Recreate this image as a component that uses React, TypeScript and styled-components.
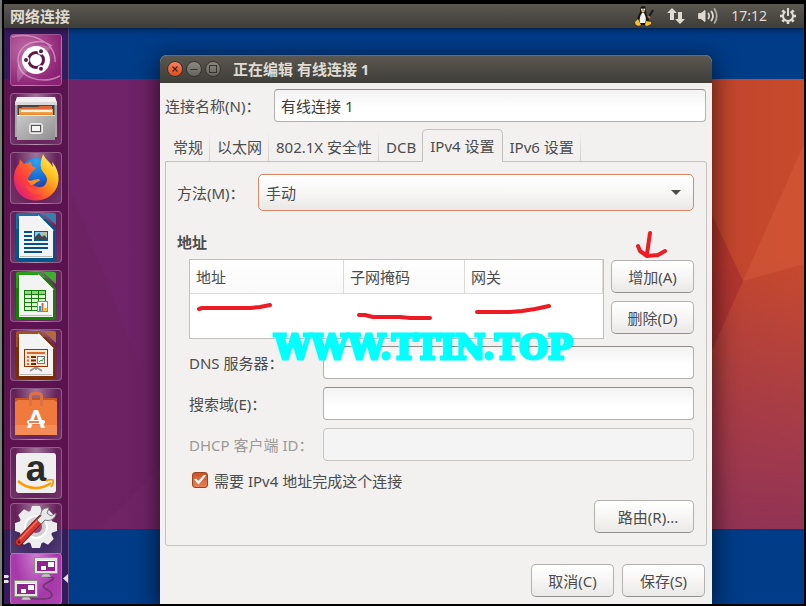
import React from "react";
import styled, { createGlobalStyle, css } from "styled-components";

const GlobalStyle = createGlobalStyle`
  * { box-sizing: border-box; }
  body {
    margin: 0;
    background: #000;
    color: #4c4c4c;
    font: 15px/22px "Noto Sans", "Noto Sans CJK SC", sans-serif;
  }
  button, input, select { font: inherit; color: inherit; }
`;

const Frame = styled.div`
  display: flex;
  flex-direction: column;
  height: 100vh;
  padding: 4px 2px 2px 2px;
  border-left: 2px solid #7c7c7c;
  background: #000;
`;

const TopPanel = styled.header`
  position: relative;
  z-index: 2;
  display: flex;
  align-items: center;
  justify-content: space-between;
  flex: none;
  height: 24px;
  padding: 0 8px 0 6px;
  background: linear-gradient(#5b5851, #3f3d38);
  box-shadow: 0 1px 6px rgba(0, 0, 0, 0.6);
  color: #dfdbd2;
`;

const PanelTitle = styled.span`
  font-weight: 600;
`;

const Indicators = styled.div`
  display: flex;
  align-items: center;
  gap: 13px;
`;

const Clock = styled.time`
  font-size: 14px;
`;

const Screen = styled.div`
  position: relative;
  display: flex;
  flex: 1;
  min-height: 0;
  overflow: hidden;
  background: #003c88;
`;

const WallpaperArt = styled.svg`
  position: absolute;
  inset: 0;
  width: 100%;
  height: 100%;
`;

const Launcher = styled.nav`
  position: relative;
  flex: none;
  width: 65px;
  padding: 6px 6px 0;
  background: rgba(80, 10, 66, 0.65);
  border-right: 1px solid rgba(255, 255, 255, 0.2);
`;

const Tile = styled.button<{ $gap?: number; $active?: boolean; $dash?: boolean }>`
  position: relative;
  display: block;
  width: 52px;
  height: 52px;
  margin: 0 0 ${(p) => p.$gap ?? 7}px;
  padding: 0;
  border: 1px solid rgba(255, 255, 255, 0.24);
  border-radius: 4px;
  background: radial-gradient(ellipse at 50% 0, rgba(255, 255, 255, 0.42), rgba(255, 255, 255, 0.06) 60%, rgba(255, 255, 255, 0.14));
  ${(p) => p.$dash && css`background: radial-gradient(circle at 30% 30%, #c06ba8, #8c2274 75%);`}
  ${(p) => p.$active && css`background: radial-gradient(ellipse at 50% 0, #d07cd2, #a638a9 60%, #b044b2);`}
`;

const TileArt = styled.svg`
  display: block;
  width: 52px;
  height: 52px;
  margin: -1px;
`;

const RunningMark = styled.svg`
  position: absolute;
  left: 0;
  top: 545px;
  width: 64px;
  height: 12px;
`;

const Desktop = styled.main`
  position: relative;
  display: flex;
  flex: 1;
  min-width: 0;
  padding: 27px 92px 0 91px;
`;

const Window = styled.section`
  position: relative;
  display: flex;
  flex: 1;
  flex-direction: column;
  min-width: 0;
  border-radius: 7px 7px 0 0;
  background: #f2f1f0;
  box-shadow: 0 6px 24px 2px rgba(0, 0, 0, 0.6);
`;

const TitleBar = styled.header`
  display: flex;
  align-items: center;
  gap: 3px;
  height: 28px;
  padding: 0 8px 0 7px;
  border-radius: 7px 7px 0 0;
  background: linear-gradient(#5b5851, #3f3d38);
  box-shadow: inset 0 1px #6d6a62;
`;

const WindowButton = styled.button<{ $close?: boolean }>`
  display: grid;
  place-items: center;
  width: 16px;
  height: 16px;
  padding: 0;
  border: 1px solid #34332f;
  border-radius: 50%;
  background: ${(p) => (p.$close ? "linear-gradient(#f5825c, #df4b1c)" : "linear-gradient(#8b887f, #66645d)")};
  svg { width: 14px; height: 14px; }
`;

const WindowTitle = styled.h1`
  margin: 0 0 0 9px;
  color: #dfdbd2;
  font-size: 15px;
  font-weight: 700;
  line-height: 28px;
`;

const Form = styled.form`
  display: flex;
  flex-direction: column;
  padding: 6px 5px 0;
`;

const Row = styled.div`
  display: flex;
  align-items: center;
`;

const NameRow = styled(Row)`
  padding-right: 1px;
  margin-bottom: 7px;
`;

const Fields = styled.div`
  display: grid;
  gap: 8px;
  margin-top: 7px;
  padding-left: 12px;
`;

const Label = styled.label<{ $width: number; $muted?: boolean }>`
  flex: none;
  width: ${(p) => p.$width}px;
  white-space: nowrap;
  color: ${(p) => (p.$muted ? "#9c9a97" : "inherit")};
`;

const TextBox = styled.input`
  flex: 1;
  min-width: 0;
  height: 33px;
  padding: 0 6px;
  border: 1px solid #b3b1ad;
  border-top-color: #8f8d8a;
  border-radius: 4px;
  background: linear-gradient(#f3f3f3, #fff 60%);
  color: #3c3c3c;
  &:disabled {
    border-color: #c8c6c3;
    background: #f4f4f4;
  }
`;

const TabList = styled.div`
  display: flex;
  align-items: flex-end;
  height: 33px;
  margin-bottom: -1px;
  padding-left: 1px;
`;

const Tab = styled.button<{ $active?: boolean }>`
  height: 32px;
  padding: 2px 7px 0;
  border: 0;
  white-space: nowrap;
  background: linear-gradient(rgba(190, 188, 184, 0), #cfcdca) right / 1px 100% no-repeat;
  ${(p) =>
    p.$active &&
    css`
      position: relative;
      height: 33px;
      margin-left: -1px;
      padding: 0 7px;
      border: 1px solid #c2c1be;
      border-bottom: 0;
      border-radius: 5px 5px 0 0;
      background: #f2f1f0;
    `}
`;

const TabPanel = styled.div`
  height: 385px;
  padding: 12px 12px 0 11px;
  border: 1px solid #c2c1be;
  border-radius: 0 3px 3px 3px;
`;

const SelectBox = styled.div`
  position: relative;
  flex: 1;
  svg {
    position: absolute;
    right: 12px;
    top: 15px;
    width: 12px;
    height: 7px;
    pointer-events: none;
  }
`;

const Select = styled.select`
  width: 100%;
  height: 37px;
  padding: 0 7px;
  border: 1px solid #d98767;
  border-radius: 5px;
  background: linear-gradient(#fff, #f8f7f6 50%, #eae8e6);
  appearance: none;
`;

const SectionTitle = styled.h2`
  margin: 20px 0 6px;
  font-size: 15px;
  font-weight: 700;
  line-height: 22px;
`;

const AddressArea = styled.div`
  display: flex;
  gap: 7px;
  padding-left: 12px;
`;

const AddressTable = styled.table`
  flex: 1;
  height: 80px;
  border: 1px solid #c2c0bd;
  border-collapse: separate;
  border-spacing: 0;
  table-layout: fixed;
  background: #fff;
`;

const HeadCell = styled.th<{ $width?: number }>`
  width: ${(p) => (p.$width ? `${p.$width}px` : "auto")};
  height: 34px;
  padding: 0 6px;
  border-right: 1px solid #dddbd8;
  border-bottom: 1px solid #dddbd8;
  background: linear-gradient(#fff, #f9f9fa);
  font-weight: 400;
  text-align: left;
`;

const ButtonStack = styled.div`
  display: grid;
  align-content: start;
  gap: 8px;
  padding-top: 1px;
`;

const PushButton = styled.button<{ $wide?: boolean }>`
  width: ${(p) => (p.$wide ? 100 : 83)}px;
  height: 33px;
  padding: ${(p) => (p.$wide ? "0 0 0 8px" : "0")};
  border: 1px solid #b4b2ae;
  border-bottom-color: #94928e;
  border-radius: 5px;
  background: linear-gradient(#fff, #f7f6f5 50%, #eae8e6);
`;

const CheckRow = styled.label`
  display: flex;
  align-items: center;
  gap: 6px;
  margin-top: 9px;
  padding-left: 15px;
`;

const CheckBox = styled.input`
  display: grid;
  place-items: center;
  width: 16px;
  height: 16px;
  margin: 0 0 3px;
  border: 1px solid #9c4524;
  border-radius: 3px;
  background: linear-gradient(#d2511f, #e48158);
  appearance: none;
  &:checked::before {
    content: "";
    width: 12px;
    height: 10px;
    background: #fff;
    clip-path: polygon(0 50%, 18% 40%, 36% 66%, 86% 0, 100% 10%, 38% 100%);
  }
`;

const Actions = styled.div<{ $inset?: boolean }>`
  display: flex;
  justify-content: flex-end;
  gap: 8px;
  margin-top: ${(p) => (p.$inset ? 8 : 18)}px;
  padding-right: ${(p) => (p.$inset ? 0 : 2)}px;
`;

const Marks = styled.svg`
  position: absolute;
  left: 0;
  top: 0;
  width: 552px;
  height: 549px;
  pointer-events: none;
`;

const Watermark = styled.span`
  position: absolute;
  left: 114px;
  top: 271px;
  color: #00ffff;
  font: 700 33px/44px "DejaVu Serif", serif;
  -webkit-text-stroke: 3px #00ffff;
  white-space: nowrap;
  pointer-events: none;
`;

const Wallpaper = () => (
  <WallpaperArt viewBox="0 0 800 576" preserveAspectRatio="none" aria-hidden="true">
    <defs>
      <linearGradient id="wp" x1="0" x2="1">
        <stop offset="0" stopColor="#73246c" />
        <stop offset=".2" stopColor="#6e2266" />
        <stop offset=".85" stopColor="#bf442d" />
        <stop offset="1" stopColor="#c84a2c" />
      </linearGradient>
      <linearGradient id="wpFade" x1="0" y1="0" x2="0" y2="1">
        <stop offset=".4" stopColor="#8e335e" stopOpacity="0" />
        <stop offset="1" stopColor="#923355" />
      </linearGradient>
    </defs>
    <rect y="51" width="800" height="450" fill="url(#wp)" />
    <path d="M66 160 136 340V501H66Z" fill="#651f55" opacity=".25" />
    <path d="M95 501 160 436V501Z" fill="#7b2a6b" opacity=".25" />
    <rect x="400" y="51" width="400" height="450" fill="url(#wpFade)" />
    <path d="M800 116 739 253 800 236Z" fill="#e06743" opacity=".32" />
    <path d="M700 170 739 253 700 340Z" fill="#9b1f2c" opacity=".4" />
  </WallpaperArt>
);

const DashIcon = () => (
  <TileArt viewBox="0 0 52 52">
    <path d="M2 3C22-2 46 8 45 28M50 42C32 51 8 44 8 26C8 10 28 2 42 12" fill="none" stroke="#e7b5da" strokeWidth="1.500" opacity=".6" />
    <path d="M8 48C3 24 20 4 42 14L26 26Z" fill="#fff" opacity=".2" />
    <circle cx="26" cy="26" r="14" fill="#fff" />
    <circle cx="26" cy="26" r="7.500" fill="none" stroke="#5e1747" strokeWidth="3" />
    <g stroke="#fff" strokeWidth="1.400" fill="#5e1747">
      <circle cx="16" cy="26" r="2.700" /><circle cx="31" cy="17.300" r="2.700" /><circle cx="31" cy="34.700" r="2.700" />
    </g>
  </TileArt>
);

const FilesIcon = () => (
  <TileArt viewBox="0 0 52 52">
    <defs>
      <linearGradient id="cab" x1="0" x2="1" y1="0" y2="1"><stop stopColor="#c9c9c9" /><stop offset="1" stopColor="#8f8f8f" /></linearGradient>
    </defs>
    <path d="M7 4H45L47 10V44H5V10Z" fill="#a9a9a9" />
    <path d="M7 4H45L47 10H5Z" fill="#f1f1f1" />
    <path d="M5 9H47V12H5Z" fill="#d8d8d8" />
    <path d="M7.500 12H44.500V23H7.500Z" fill="#45433f" />
    <path d="M12 14H28L30 13H42V22H9V15H12Z" fill="#dc6738" />
    <path d="M9 16H43V22H9Z" fill="#f2a34c" />
    <path d="M11 17H42V19H11Z" fill="#fff1da" />
    <path d="M9 20H43V22H9Z" fill="#ee8f35" />
    <path d="M7 22H45V47H7Z" fill="url(#cab)" />
    <path d="M7 22.500H45" stroke="#ececec" />
    <rect x="19.500" y="30.500" width="13" height="10" rx="2" fill="#cfcfcf" stroke="#eee" />
    <rect x="21.500" y="32.500" width="9" height="6" fill="#f5f5f5" stroke="#555" />
  </TileArt>
);

const FirefoxIcon = () => (
  <TileArt viewBox="0 0 52 52">
    <defs>
      <linearGradient id="fxTail" x1=".8" y1="0" x2=".2" y2="1"><stop stopColor="#fff36a" /><stop offset=".35" stopColor="#ffc21f" /><stop offset=".65" stopColor="#ff7b1e" /><stop offset="1" stopColor="#f5314e" /></linearGradient>
      <linearGradient id="fxBody" x1=".8" x2="0" y1=".2" y2=".8"><stop stopColor="#ff9a1f" /><stop offset=".6" stopColor="#ff4138" /><stop offset="1" stopColor="#d81a83" /></linearGradient>
      <radialGradient id="fxGlobe" cx=".5" cy=".1" r="1"><stop stopColor="#29a5f5" /><stop offset=".55" stopColor="#1763d0" /><stop offset="1" stopColor="#371c70" /></radialGradient>
    </defs>
    <circle cx="26.500" cy="23" r="17" fill="url(#fxGlobe)" />
    <path d="M10 7 14 12 21 10 22 14 26 16 22 20 20 23 18 26C18 31 24 35 30 35C36 35 40 29 40 23L48 24C49 38 40 48 27 48.500C13 49 4 39 4 27C4 20 6 15 9 12Z" fill="url(#fxBody)" />
    <path d="M33 2C31 8 30 12 31 16C32 20 36 22 37 27C37 33 32 37 27 37C22 37 18 35 16 32C17 42 27 44 33 41C31 44 26 47 20 46C34 51 48 42 48.500 28C49 21 46 14 42 10L43 15C40 10 35 7 33 2Z" fill="url(#fxTail)" />
    <path d="M17 28C21 30 24 27 29 27L30 29C26 29 26 33 21 33Z" fill="#ff8b20" />
  </TileArt>
);

const OfficeIcon = ({ dark, light, children }: { dark: string; light: string; children: React.ReactNode }) => (
  <TileArt viewBox="0 0 52 52">
    <path d="M8 2H30L46 18V48Q46 50 44 50H8Q6 50 6 48V4Q6 2 8 2Z" fill={dark} />
    <path d="M8 2H30L36 8H8V18H6V4Q6 2 8 2Z" fill={light} opacity=".6" />
    <path d="M34 2H44Q46 2 46 4V14L34 3Z" fill={light} />
    <path d="M9 5H28L43 20V47H9Z" fill="#f3f3f3" />
    <path d="M28 5 43 20" stroke="#fff" strokeWidth="2" />
    <path d="M10 45.500H42" stroke="#b9b9b9" />
    {children}
  </TileArt>
);

const WriterIcon = () => (
  <OfficeIcon dark="#02568a" light="#347fae">
    <path d="M14 21H22M14 25H22M14 29H22M14 33H38M14 37H38M14 41H32" stroke="#045286" strokeWidth="2" />
    <rect x="24.500" y="20.500" width="13" height="9" fill="#8fc8ef" stroke="#05598d" />
    <path d="M25 29V26L29 22 32 26 34 24 37 27V29Z" fill="#444" />
    <circle cx="35" cy="22.500" r="1.500" fill="#f5b72e" />
  </OfficeIcon>
);

const CalcIcon = () => (
  <OfficeIcon dark="#118200" light="#3caf30">
    <rect x="14.500" y="20.500" width="21" height="20" fill="#ddf6d8" stroke="#157b08" />
    <path d="M15 21H35V24H15Z" fill="#8bd67e" />
    <path d="M14 24.500H36M14 28.500H36M14 32.500H36M14 36.500H36M21.500 20V41M28.500 20V41" stroke="#157b08" />
    <rect x="27.500" y="31.500" width="10" height="10" fill="#fff" stroke="#888" />
    <path d="M30 41V36" stroke="#2396d5" strokeWidth="2" /><path d="M32.500 41V33" stroke="#d36a27" strokeWidth="2" /><path d="M35.500 41V38" stroke="#edb70f" strokeWidth="2.500" />
  </OfficeIcon>
);

const ImpressIcon = () => (
  <OfficeIcon dark="#7a2e03" light="#b36a3c">
    <path d="M26 38V41M26 38 20 42M26 38 32 42" stroke="#999" strokeWidth="2" />
    <rect x="14.500" y="20.500" width="23" height="17" fill="#fbe3d2" stroke="#963606" />
    <path d="M17 24H35" stroke="#da692d" strokeWidth="2" />
    <path d="M17 28H19M17 31.500H19M17 35H19" stroke="#da692d" strokeWidth="2" />
    <path d="M21 28H26M21 31.500H26M21 35H26" stroke="#752c06" strokeWidth="2" />
    <rect x="27.500" y="27.500" width="7" height="7" fill="#fff" stroke="#777" />
    <path d="M29 33 31 31 32 32 34 29" fill="none" stroke="#31a52b" />
  </OfficeIcon>
);

const SoftwareIcon = () => (
  <TileArt viewBox="0 0 52 52">
    <path d="M5 10H47V15H5Z" fill="#c45424" />
    <path d="M5 14 8 12H44L47 14V47H5Z" fill="#f07a3c" />
    <path d="M5 37H47V47H5Z" fill="#f38c55" />
    <path d="M20.500 18V9Q20.500 5.500 24 5.500H28Q31.500 5.500 31.500 9V18" fill="none" stroke="#dd7146" strokeWidth="3" />
    <text x="26" y="40" fill="#fff" fontFamily="Lato" fontWeight="900" fontSize="25" textAnchor="middle">A</text>
    <rect x="17" y="32" width="18" height="4" rx="2" fill="#fff" />
    <path d="M19 34H29" stroke="#e95420" strokeWidth="1.500" />
  </TileArt>
);

const AmazonIcon = () => (
  <TileArt viewBox="0 0 52 52">
    <rect x="6" y="6" width="40" height="40" rx="3" fill="#efefef" />
    <text x="26" y="34" fill="#2b2b2b" fontFamily="Liberation Sans" fontWeight="700" fontSize="37" textAnchor="middle">a</text>
    <path d="M8 34C18 43 31 43 41 36" fill="none" stroke="#ff9900" strokeWidth="2.500" />
    <path d="M36 34Q40 32 43 33Q44 36 41 40" fill="none" stroke="#ff9900" strokeWidth="1.800" />
  </TileArt>
);

const SettingsIcon = () => (
  <TileArt viewBox="0 0 52 52">
    <g fill="#ececec" transform="translate(26 24)">
      <circle r="17" />
      {[0, 45, 90, 135, 180, 225, 270, 315].map((a) => (
        <path key={a} d="M-6-15-4-21H4L6-15Z" transform={`rotate(${a})`} />
      ))}
    </g>
    <circle cx="26" cy="24" r="11" fill="#cfcfcf" stroke="#fff" strokeWidth="2" />
    <circle cx="26" cy="24" r="6" fill="#8b4779" />
    <path d="M9 39 31 16" stroke="#8f1b1a" strokeWidth="8" strokeLinecap="round" />
    <path d="M9 39 31 16" stroke="#d8372f" strokeWidth="6" strokeLinecap="round" />
    <path d="M10 36 28 17" stroke="#f0705d" strokeWidth="1.500" />
    <circle cx="9" cy="39" r="1.500" fill="#721517" />
    <path d="M27 17 31 21 35 17C40 19 46 15 46 10L41 13 37 10 39 5C34 4 30 8 31 13Z" fill="#e8e8e8" stroke="#777" />
  </TileArt>
);

const MonitorArt = ({ x, y }: { x: number; y: number }) => (
  <g transform={`translate(${x} ${y})`}>
    <path d="M9 17H15L17 20H7Z" fill="#c5c5c5" stroke="#777" strokeWidth=".5" />
    <rect x=".5" y=".5" width="23" height="16" fill="#e3e3dd" stroke="#8b8b84" />
    <rect x="3" y="3" width="18" height="11" fill="#8f248e" />
    <path d="M3 3H21V4H3ZM7 9H12V13H7ZM14 5H20V10H14Z" fill="#fff" />
  </g>
);

const NetworkIcon = () => (
  <TileArt viewBox="0 0 52 52">
    <path d="M38 24C49 24 41 28 35 31C28 36 46 37 41 44C37 48 27 45 19 46" fill="none" stroke="#65376b" strokeWidth="1.500" />
    <MonitorArt x={24} y={4} />
    <MonitorArt x={4} y={27} />
  </TileArt>
);

const apps = [
  { name: "搜索您的计算机", Icon: DashIcon, dash: true },
  { name: "文件", Icon: FilesIcon },
  { name: "Firefox", Icon: FirefoxIcon },
  { name: "LibreOffice Writer", Icon: WriterIcon },
  { name: "LibreOffice Calc", Icon: CalcIcon },
  { name: "LibreOffice Impress", Icon: ImpressIcon },
  { name: "Ubuntu 软件", Icon: SoftwareIcon },
  { name: "Amazon", Icon: AmazonIcon, gap: 4 },
  { name: "系统设置", Icon: SettingsIcon, gap: -2 },
  { name: "网络连接", Icon: NetworkIcon, active: true },
];

const PenguinIcon = () => (
  <svg width="20" height="22" viewBox="0 0 20 22">
    <path d="M9 1C6 1 6 5 6 7C5 9 3 12 3 16L6 20H12L15 16C14 12 12 9 12 7C12 4 12 1 9 1Z" fill="#161616" />
    <path d="M8 8C6 11 5 14 6 18H11C13 14 11 10 10 8Z" fill="#f1f1f1" />
    <path d="M7 6 9 5 11 6 9 8ZM1 17 4 14 7 20C4 22 1 20 1 17ZM11 20 12 16 17 17V19L13 21Z" fill="#fbc127" />
    <circle cx="7.800" cy="4.500" r="1" fill="#fff" /><circle cx="10.300" cy="4.500" r="1" fill="#fff" />
    <path d="M19 5 13 15" stroke="#191919" strokeWidth="2" /><path d="M14 11 16 13" stroke="#bb704b" strokeWidth="2" />
  </svg>
);

const TransferIcon = () => (
  <svg width="18" height="18" viewBox="0 0 18 18" fill="#dfdbd2">
    <path d="M5 1 10 6H7V13H3V6H0ZM13 17 8 12H11V5H15V12H18Z" />
  </svg>
);

const VolumeIcon = () => (
  <svg width="20" height="18" viewBox="0 0 20 18" fill="none" stroke="#dfdbd2" strokeWidth="1.800" strokeLinecap="round">
    <path d="M1 6.500H3L7 3.500V14.500L3 11.500H1Z" fill="#dfdbd2" strokeWidth="1" />
    <path d="M10.500 6.500Q12 9 10.500 11.500M13.500 4.500Q16.500 9 13.500 13.500" /><path d="M16.500 2Q21 9 16.500 16" opacity=".65" />
  </svg>
);

const SessionIcon = () => (
  <svg width="16" height="16" viewBox="0 0 16 16" fill="none" stroke="#dfdbd2">
    {[45, 90, 135, 180, 225, 270, 315].map((a) => (
      <path key={a} d="M8 0V3" strokeWidth="2.600" transform={`rotate(${a} 8 8)`} />
    ))}
    <path d="M5.500 3.700A5 5 0 1 0 10.500 3.700" strokeWidth="2" /><path d="M8 0V8" strokeWidth="2" />
  </svg>
);

const tabs = ["常规", "以太网", "802.1X 安全性", "DCB", "IPv4 设置", "IPv6 设置"];

export default function App() {
  return (
    <>
      <GlobalStyle />
      <Frame>
        <TopPanel>
          <PanelTitle>网络连接</PanelTitle>
          <Indicators>
            <PenguinIcon />
            <TransferIcon />
            <VolumeIcon />
            <Clock>17:12</Clock>
            <SessionIcon />
          </Indicators>
        </TopPanel>
        <Screen>
          <Wallpaper />
          <Launcher>
            {apps.map(({ name, Icon, gap, active, dash }) => (
              <Tile key={name} type="button" aria-label={name} $gap={gap} $active={active} $dash={dash}>
                <Icon />
              </Tile>
            ))}
            <RunningMark viewBox="0 0 64 12" fill="#e4dfe4" aria-hidden="true">
              <path d="M0 2H4L5 3.500 4 5H0ZM0 7H4L5 8.500 4 10H0ZM64 1V10L59 5.500Z" />
            </RunningMark>
          </Launcher>
          <Desktop>
            <Window aria-label="正在编辑 有线连接 1">
              <TitleBar>
                <WindowButton type="button" aria-label="关闭" $close>
                  <svg viewBox="0 0 14 14"><path d="M4.500 4.500 9.500 9.500M9.500 4.500 4.500 9.500" stroke="#4b2114" strokeWidth="1.200" /></svg>
                </WindowButton>
                <WindowButton type="button" aria-label="最小化">
                  <svg viewBox="0 0 14 14"><path d="M3.500 7.500H10.500" stroke="#35342f" /></svg>
                </WindowButton>
                <WindowButton type="button" aria-label="最大化">
                  <svg viewBox="0 0 14 14"><rect x="3.500" y="3.500" width="7" height="7" fill="none" stroke="#35342f" /></svg>
                </WindowButton>
                <WindowTitle>正在编辑 有线连接 1</WindowTitle>
              </TitleBar>
              <Form onSubmit={(e) => e.preventDefault()}>
                <NameRow>
                  <Label htmlFor="name" $width={109}>连接名称(N)：</Label>
                  <TextBox id="name" defaultValue="有线连接 1" />
                </NameRow>
                <TabList role="tablist">
                  {tabs.map((t, i) => (
                    <Tab key={t} type="button" role="tab" aria-selected={i === 4} $active={i === 4}>{t}</Tab>
                  ))}
                </TabList>
                <TabPanel role="tabpanel">
                  <Row>
                    <Label htmlFor="method" $width={81}>方法(M)：</Label>
                    <SelectBox>
                      <Select id="method"><option>手动</option></Select>
                      <svg viewBox="0 0 12 7"><path d="M1 1H11L6 6Z" fill="#4c4c4c" /></svg>
                    </SelectBox>
                  </Row>
                  <SectionTitle>地址</SectionTitle>
                  <AddressArea>
                    <AddressTable>
                      <thead>
                        <tr><HeadCell $width={154}>地址</HeadCell><HeadCell $width={121}>子网掩码</HeadCell><HeadCell>网关</HeadCell></tr>
                      </thead>
                      <tbody><tr><td /><td /><td /></tr></tbody>
                    </AddressTable>
                    <ButtonStack>
                      <PushButton type="button">增加(A)</PushButton>
                      <PushButton type="button">删除(D)</PushButton>
                    </ButtonStack>
                  </AddressArea>
                  <Fields>
                    <Row>
                      <Label htmlFor="dns" $width={134}>DNS 服务器：</Label>
                      <TextBox id="dns" />
                    </Row>
                    <Row>
                      <Label htmlFor="search" $width={134}>搜索域(E)：</Label>
                      <TextBox id="search" />
                    </Row>
                    <Row>
                      <Label htmlFor="dhcp" $width={134} $muted>DHCP 客户端 ID：</Label>
                      <TextBox id="dhcp" disabled />
                    </Row>
                  </Fields>
                  <CheckRow>
                    <CheckBox type="checkbox" defaultChecked />
                    需要 IPv4 地址完成这个连接
                  </CheckRow>
                  <Actions $inset>
                    <PushButton type="button" $wide>路由(R)...</PushButton>
                  </Actions>
                </TabPanel>
                <Actions>
                  <PushButton type="button">取消(C)</PushButton>
                  <PushButton type="submit">保存(S)</PushButton>
                </Actions>
              </Form>
              <Marks viewBox="0 0 552 549" fill="none" stroke="#ed1c24" strokeWidth="4" strokeLinejoin="round" strokeLinecap="round" aria-hidden="true">
                <path d="M39 254 42 253H90L100 252 110 250" />
                <path d="M199 260 205 260 213 262H240L250 263H270" />
                <path d="M317 257H350L362 256 375 254 389 251" />
                <path d="M490 178 487 199M478 191 480 196 487 201 498 200 505 196" />
              </Marks>
              <Watermark>WWW.TTIN.TOP</Watermark>
            </Window>
          </Desktop>
        </Screen>
      </Frame>
    </>
  );
}
